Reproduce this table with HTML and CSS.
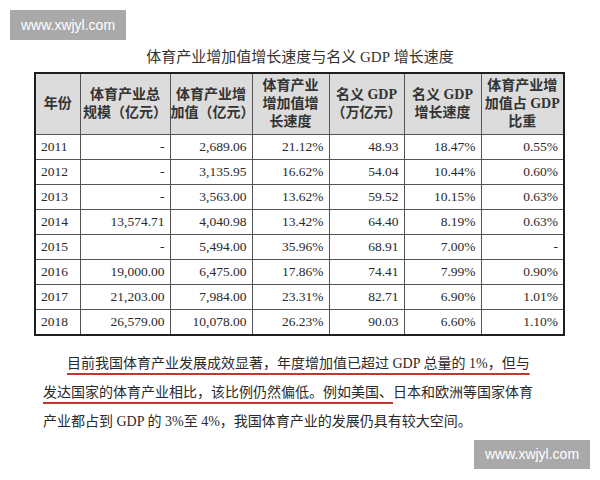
FILE: index.html
```html
<!DOCTYPE html>
<html lang="zh">
<head>
<meta charset="utf-8">
<link rel="stylesheet" href="styles.css">
</head>
<body>
<div class="page">
  <div class="wm wm-top">www.xwjyl.com</div>
  <h1 class="title">体育产业增加值增长速度与名义 <span class="latin">GDP</span> 增长速度</h1>
  <table class="data">
    <colgroup>
      <col class="c1"><col class="c2"><col class="c3"><col class="c4"><col class="c5"><col class="c6"><col class="c7">
    </colgroup>
    <thead>
      <tr>
        <th>年份</th>
        <th>体育产业总<br>规模（亿元）</th>
        <th>体育产业增<br>加值（亿元）</th>
        <th>体育产业<br>增加值增<br>长速度</th>
        <th>名义 <span class="latin">GDP</span><br>（万亿元）</th>
        <th>名义 <span class="latin">GDP</span><br>增长速度</th>
        <th>体育产业增<br>加值占 <span class="latin">GDP</span><br>比重</th>
      </tr>
    </thead>
    <tbody>
      <tr><td class="yr">2011</td><td>-</td><td>2,689.06</td><td>21.12%</td><td>48.93</td><td>18.47%</td><td>0.55%</td></tr>
      <tr><td class="yr">2012</td><td>-</td><td>3,135.95</td><td>16.62%</td><td>54.04</td><td>10.44%</td><td>0.60%</td></tr>
      <tr><td class="yr">2013</td><td>-</td><td>3,563.00</td><td>13.62%</td><td>59.52</td><td>10.15%</td><td>0.63%</td></tr>
      <tr><td class="yr">2014</td><td>13,574.71</td><td>4,040.98</td><td>13.42%</td><td>64.40</td><td>8.19%</td><td>0.63%</td></tr>
      <tr><td class="yr">2015</td><td>-</td><td>5,494.00</td><td>35.96%</td><td>68.91</td><td>7.00%</td><td>-</td></tr>
      <tr><td class="yr">2016</td><td>19,000.00</td><td>6,475.00</td><td>17.86%</td><td>74.41</td><td>7.99%</td><td>0.90%</td></tr>
      <tr><td class="yr">2017</td><td>21,203.00</td><td>7,984.00</td><td>23.31%</td><td>82.71</td><td>6.90%</td><td>1.01%</td></tr>
      <tr><td class="yr">2018</td><td>26,579.00</td><td>10,078.00</td><td>26.23%</td><td>90.03</td><td>6.60%</td><td>1.10%</td></tr>
    </tbody>
  </table>
  <div class="para">
    <div class="line first"><span class="mark">目前我国体育产业发展成效显著，年度增加值已超过 GDP 总量的 1%，但与</span></div>
    <div class="line"><span class="mark">发达国家的体育产业相比，该比例仍然偏低。例如美国、</span>日本和欧洲等国家体育</div>
    <div class="line">产业都占到 GDP 的 3%至 4%，我国体育产业的发展仍具有较大空间。</div>
  </div>
  <div class="wm wm-bottom">www.xwjyl.com</div>
</div>
</body>
</html>
```
FILE: styles.css
```css
html, body {
  margin: 0;
  padding: 0;
  background: #ffffff;
}
.page {
  position: relative;
  width: 600px;
  height: 480px;
  overflow: hidden;
  font-family: "Liberation Serif", "Noto Sans CJK SC", serif;
  color: #2a2a2a;
}
.wm {
  position: absolute;
  width: 116px;
  height: 30px;
  background: #a9a9a9;
  color: #ffffff;
  font-family: "Liberation Sans", Arial, sans-serif;
  font-size: 14px;
  line-height: 30px;
  text-align: center;
}
.wm-top {
  left: 10px;
  top: 10px;
}
.wm-bottom {
  left: 474px;
  top: 440px;
  height: 29px;
  line-height: 29px;
}
.title {
  margin: 0;
  padding-top: 47px;
  height: 20px;
  line-height: 20px;
  font-size: 15px;
  font-weight: normal;
  text-align: center;
  color: #333333;
}
.latin {
  font-family: "Liberation Serif", serif;
}
.data {
  margin: 5px 0 0 34px;
  width: 529px;
  border-collapse: collapse;
  table-layout: fixed;
  border: 2px solid #1e1e1e;
  font-size: 13.5px;
}
.c1 { width: 45px; }
.c2 { width: 90px; }
.c3 { width: 82px; }
.c4 { width: 77px; }
.c5 { width: 75px; }
.c6 { width: 77px; }
.c7 { width: 83px; }
.data th {
  background: #dcdcdc;
  height: 60px;
  padding: 0;
  border: 1px solid #555555;
  font-size: 14px;
  line-height: 18px;
  font-weight: bold;
  color: #333333;
  text-align: center;
  white-space: nowrap;
}
.data td {
  height: 24px;
  padding: 0 5px 0 0;
  border: 1px solid #555555;
  text-align: right;
  color: #2a2a2a;
  white-space: nowrap;
}
.data td.yr {
  text-align: left;
  padding: 0 0 0 5px;
}
.para {
  margin: 13px 0 0 43px;
  font-size: 14px;
  color: #2a2a2a;
}
.line {
  height: 29px;
  line-height: 29px;
  white-space: nowrap;
}
.line.first {
  padding-left: 24px;
}
.mark {
  text-decoration: underline;
  text-decoration-color: #c0392b;
  text-decoration-thickness: 1.5px;
  text-underline-offset: 5px;
}
```
